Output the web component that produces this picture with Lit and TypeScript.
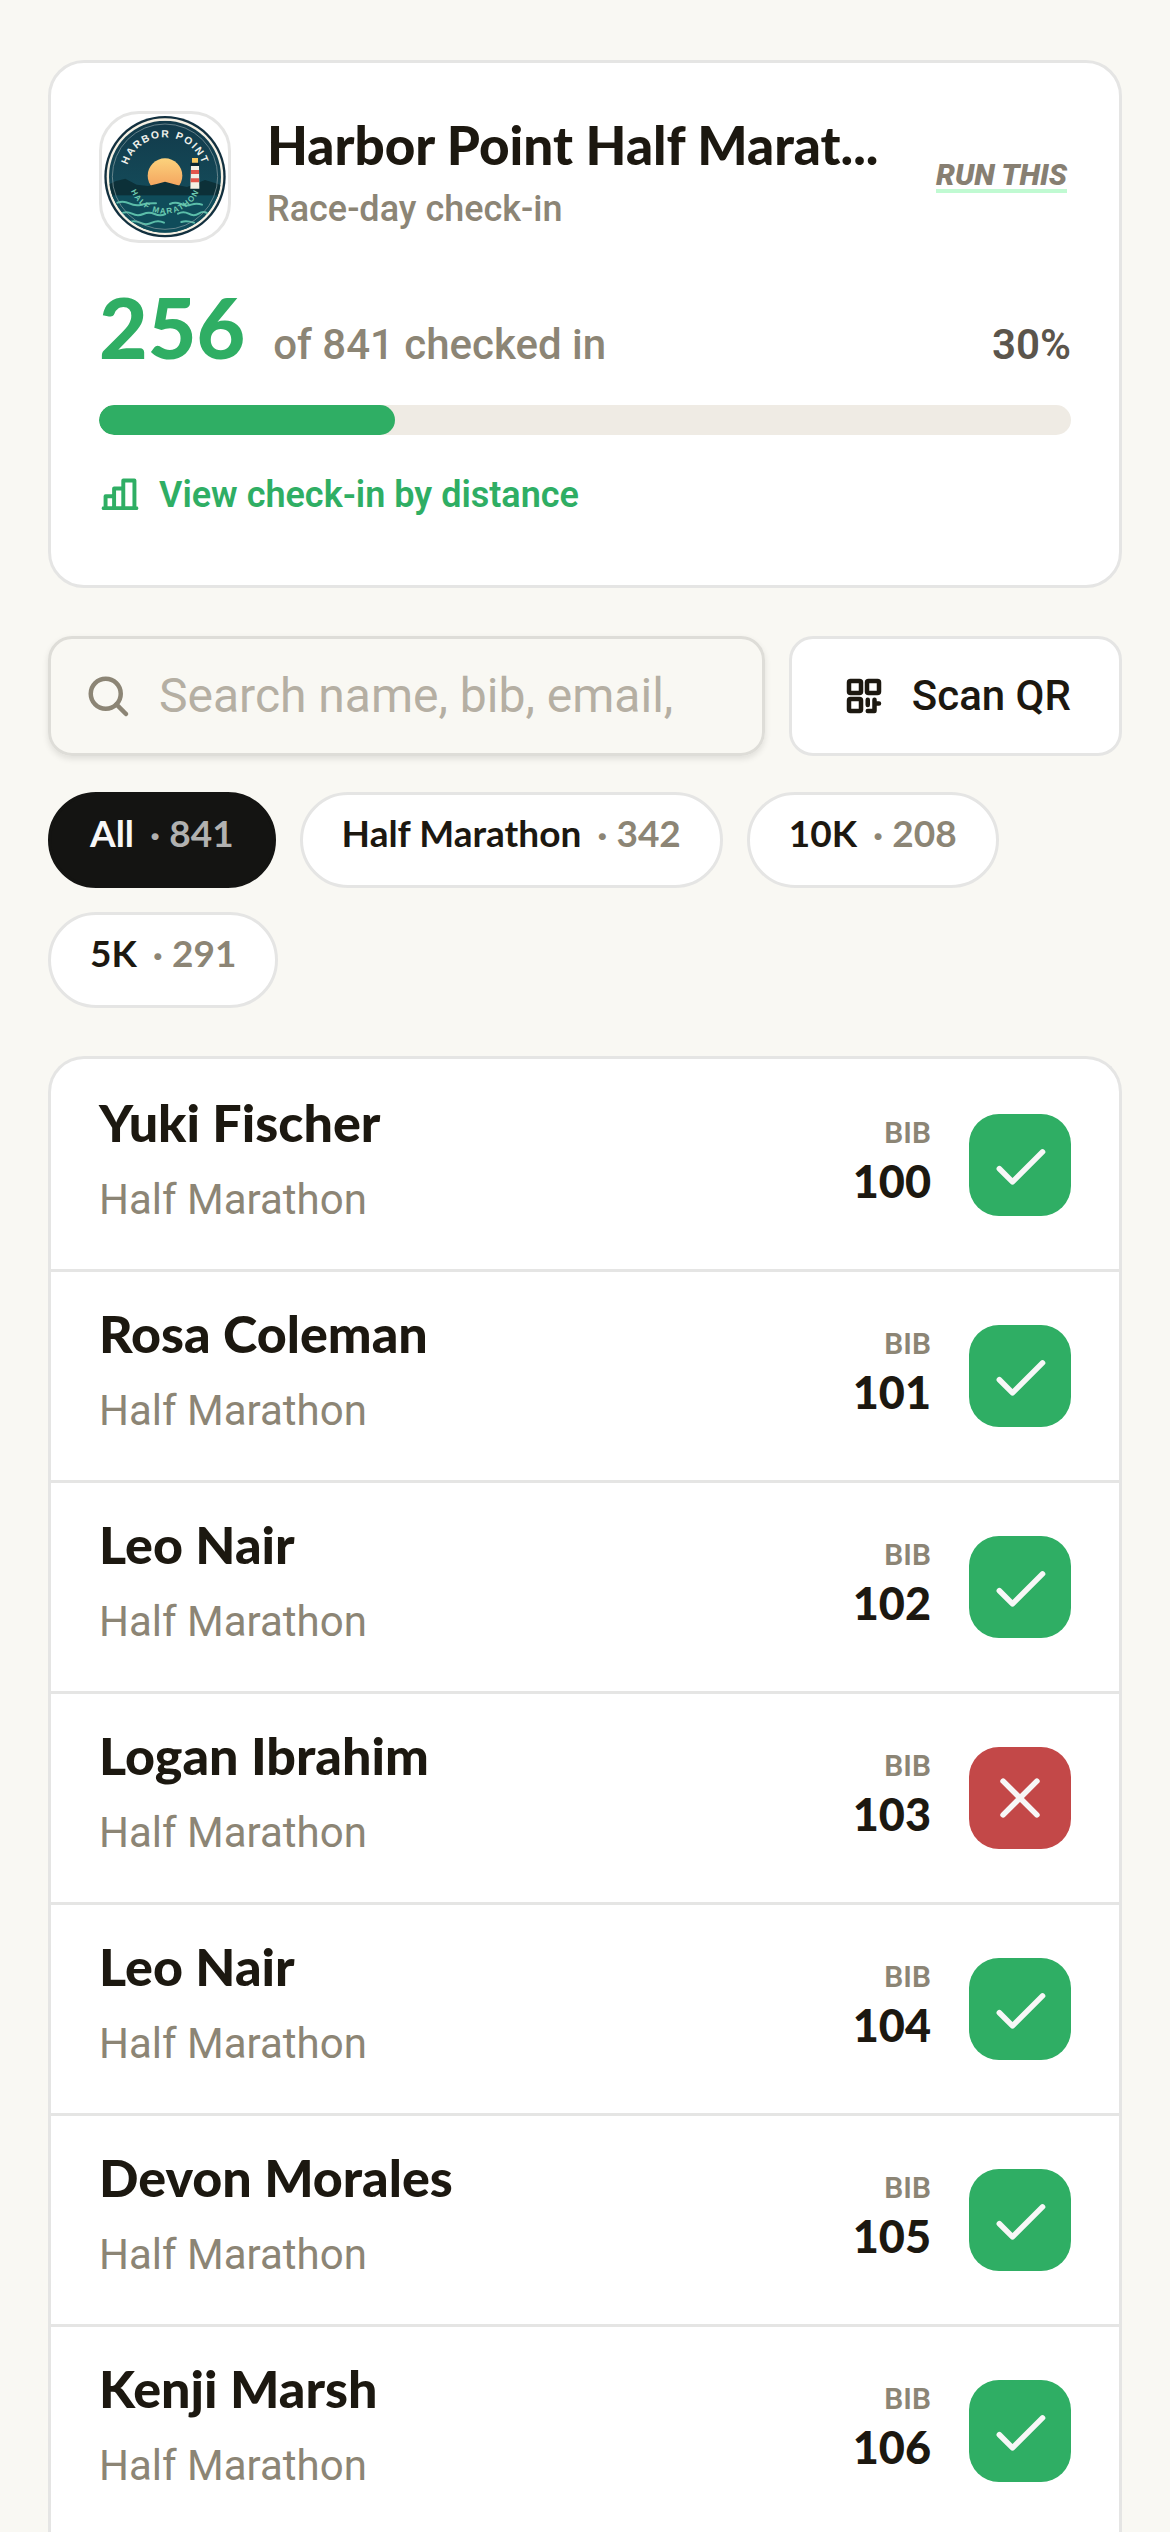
import { LitElement, html, css, svg } from 'lit';
import { customElement, property, state } from 'lit/decorators.js';
import { classMap } from 'lit/directives/class-map.js';

interface Runner {
  name: string;
  distance: string;
  bib: number;
  checkedIn: boolean;
}

interface Filter {
  label: string;
  count: number;
}

const RUNNERS: Runner[] = [
  { name: 'Yuki Fischer', distance: 'Half Marathon', bib: 100, checkedIn: true },
  { name: 'Rosa Coleman', distance: 'Half Marathon', bib: 101, checkedIn: true },
  { name: 'Leo Nair', distance: 'Half Marathon', bib: 102, checkedIn: true },
  { name: 'Logan Ibrahim', distance: 'Half Marathon', bib: 103, checkedIn: false },
  { name: 'Leo Nair', distance: 'Half Marathon', bib: 104, checkedIn: true },
  { name: 'Devon Morales', distance: 'Half Marathon', bib: 105, checkedIn: true },
  { name: 'Kenji Marsh', distance: 'Half Marathon', bib: 106, checkedIn: true },
];

const FILTERS: Filter[] = [
  { label: 'All', count: 841 },
  { label: 'Half Marathon', count: 342 },
  { label: '10K', count: 208 },
  { label: '5K', count: 291 },
];

const icons = {
  search: svg`<circle cx="116" cy="116" r="80" /><path d="M173 173l51 51" />`,
  chart: svg`<path d="M28 208h200M40 208v-72h52M92 208V88h56M148 208V40h68v168" />`,
  qr: svg`
    <rect x="48" y="48" width="64" height="64" rx="8" />
    <rect x="144" y="48" width="64" height="64" rx="8" />
    <rect x="48" y="144" width="64" height="64" rx="8" />
    <path d="M148 148v28M148 208h36v-60M184 168h24" />
  `,
  check: svg`<path d="M40 144l56 56L224 72" />`,
  cross: svg`<path d="M200 56L56 200M56 56l144 144" />`,
};

@customElement('line-icon')
export class LineIcon extends LitElement {
  @property({ type: String }) name: keyof typeof icons = 'check';

  static styles = css`
    :host {
      display: block;
      flex: none;
      width: 48px;
      height: 48px;
    }
    svg {
      display: block;
      width: 100%;
      height: 100%;
      fill: none;
      stroke: currentColor;
      stroke-width: 24;
      stroke-linecap: round;
      stroke-linejoin: round;
    }
  `;

  render() {
    return html`<svg viewBox="0 0 256 256" aria-hidden="true">${icons[this.name]}</svg>`;
  }
}

@customElement('race-badge')
export class RaceBadge extends LitElement {
  static styles = css`
    :host {
      display: block;
      flex: none;
      box-sizing: border-box;
      width: 132px;
      height: 132px;
      border: 3px solid #e5e5e4;
      border-radius: 40px;
      background: #fff;
      overflow: hidden;
    }
    svg {
      display: block;
      width: 100%;
      height: 100%;
    }
    .top,
    .bottom {
      font-family: 'Liberation Sans', Arial, sans-serif;
      font-weight: 700;
      text-anchor: middle;
    }
    .top {
      font-size: 31px;
      letter-spacing: 5px;
      fill: #eef0ea;
    }
    .bottom {
      font-size: 24px;
      letter-spacing: 4px;
      fill: #6fcbb0;
    }
  `;

  render() {
    return html`
      <svg viewBox="36 42 378 378" role="img" aria-label="Harbor Point Half Marathon">
        <defs>
          <linearGradient id="sky" x1="0" y1="0" x2="0" y2="1">
            <stop offset="0" stop-color="#123a4a" />
            <stop offset="1" stop-color="#155462" />
          </linearGradient>
          <linearGradient id="sun" x1="0" y1="0" x2="0" y2="1">
            <stop offset="0" stop-color="#fcd27c" />
            <stop offset="1" stop-color="#f29a58" />
          </linearGradient>
          <clipPath id="disc"><circle cx="225" cy="230" r="168" /></clipPath>
          <path id="arc-top" d="M107 230a118 118 0 0 1 236 0" />
          <path id="arc-bottom" d="M114 230a111 111 0 0 0 222 0" />
        </defs>
        <circle cx="225" cy="230" r="182" fill="#12303f" />
        <circle cx="225" cy="230" r="175" fill="#f6f1e4" />
        <g clip-path="url(#disc)">
          <rect x="57" y="62" width="336" height="336" fill="url(#sky)" />
          <circle cx="225" cy="227" r="52" fill="url(#sun)" />
          <path
            d="M50 256l28-13 28-7 34 18 34 4 26-6 25-7 36 10 30 6 26-10 28-11 30 9 28 10v34H50z"
            fill="#0c3038"
          />
          <rect x="57" y="286" width="336" height="120" fill="#0f4c5a" />
          <path d="M301 266l2-68h24l1 68z" fill="#f4efe4" />
          <path d="M303 210h24v12h-24zM302 235h25v12h-25z" fill="#e4574c" />
          <path d="M301 188h27v10h-27z" fill="#0c2630" />
          <path d="M306 174h18v14h-18z" fill="#f8c860" />
          <g fill="none" stroke="#5bbda9" stroke-width="6" stroke-linecap="round">
            <path d="M82 308q18-7 36 2t36 4t44-4M240 312q16-8 32 0t32 2t32 0" />
            <path d="M92 341q17-9 34 0t34 1t34 0t32 0M264 341q16-9 32 0t30 0t26-1" />
            <path d="M114 368q18-9 36 0t36 0t36 0M274 366q14-6 38 2" />
          </g>
        </g>
        <circle cx="225" cy="230" r="158" fill="none" stroke="#8fa3a6" stroke-width="2" />
        <text class="top"><textPath href="#arc-top" startOffset="50%">HARBOR POINT</textPath></text>
        <text class="bottom"><textPath href="#arc-bottom" startOffset="50%">HALF MARATHON</textPath></text>
      </svg>
    `;
  }
}

@customElement('runner-row')
export class RunnerRow extends LitElement {
  @property({ attribute: false }) runner!: Runner;

  static styles = css`
    :host {
      display: flex;
      align-items: center;
      gap: 38px;
      box-sizing: border-box;
      min-height: 211px;
      padding: 0 48px;
      border-bottom: 3px solid #e5e5e4;
      font-family: Roboto, sans-serif;
      color: #1c1810;
    }
    .who {
      flex: 1;
      min-width: 0;
      padding-bottom: 8px;
    }
    .name {
      font-family: Lato, sans-serif;
      font-size: 52px;
      font-weight: 900;
      line-height: 60px;
    }
    .distance {
      margin-top: 18px;
      font-size: 42px;
      line-height: 60px;
      color: #8c8575;
    }
    .bib {
      padding-bottom: 4px;
      text-align: right;
    }
    .bib-label {
      font-size: 30px;
      font-weight: 600;
      line-height: 36px;
      color: #8c8575;
    }
    .bib-number {
      font-family: Lato, sans-serif;
      font-size: 45px;
      font-weight: 900;
      line-height: 60px;
    }
    .toggle {
      display: grid;
      place-items: center;
      width: 102px;
      height: 102px;
      padding: 0;
      border: 0;
      border-radius: 30px;
      background: #2fae64;
      color: #f7f7f7;
      cursor: pointer;
    }
    .toggle.missing {
      background: #c34848;
    }
    .toggle line-icon {
      width: 60px;
      height: 60px;
    }
  `;

  render() {
    const { name, distance, bib, checkedIn } = this.runner;
    return html`
      <div class="who">
        <div class="name">${name}</div>
        <div class="distance">${distance}</div>
      </div>
      <div class="bib">
        <div class="bib-label">BIB</div>
        <div class="bib-number">${bib}</div>
      </div>
      <button
        type="button"
        class=${classMap({ toggle: true, missing: !checkedIn })}
        aria-pressed=${checkedIn}
        aria-label="Check in ${name}"
      >
        <line-icon name=${checkedIn ? 'check' : 'cross'}></line-icon>
      </button>
    `;
  }
}

@customElement('app-root')
export class AppRoot extends LitElement {
  @state() private _filter = 'All';
  @state() private _done = 256;
  @state() private _total = 841;

  static styles = css`
    :host {
      display: block;
      box-sizing: border-box;
      min-height: 100vh;
      padding: 60px 48px 0;
      background: #f9f8f3;
      font-family: Roboto, sans-serif;
      color: #1c1810;
    }
    .summary,
    .list {
      border: 3px solid #e5e5e4;
      border-radius: 36px;
      background: #fff;
    }
    .summary {
      padding: 48px 48px 66px;
    }
    .event {
      display: flex;
      align-items: center;
      gap: 36px;
    }
    .titles {
      flex: 1;
      min-width: 0;
    }
    h1 {
      margin: 0;
      font-family: Lato, sans-serif;
      font-size: 53px;
      font-weight: 900;
      line-height: 60px;
      white-space: nowrap;
    }
    .subtitle {
      margin: 4px 0 0;
      font-size: 36px;
      font-weight: 500;
      line-height: 60px;
      color: #8c8575;
    }
    .brand {
      margin-right: 4px;
      border-bottom: 4px solid #c0fad2;
      font-size: 30px;
      font-style: italic;
      font-weight: 900;
      line-height: 28px;
      color: #877f72;
      text-decoration: none;
    }
    .totals {
      display: flex;
      align-items: baseline;
      gap: 28px;
      margin-top: 36px;
      font-size: 42px;
      font-weight: 500;
      line-height: 60px;
      color: #8c8575;
    }
    .done {
      font-family: Lato, sans-serif;
      font-size: 84px;
      font-weight: 900;
      line-height: 96px;
      color: #2fae64;
    }
    .percent {
      margin-left: auto;
      font-weight: 600;
      color: #5b554c;
    }
    .bar {
      height: 30px;
      margin-top: 30px;
      border-radius: 15px;
      background: #efebe4;
      overflow: hidden;
    }
    .fill {
      height: 100%;
      border-radius: 15px;
      background: #2fae64;
    }
    .by-distance {
      display: flex;
      align-items: center;
      gap: 18px;
      width: fit-content;
      margin-top: 36px;
      font-size: 36px;
      font-weight: 600;
      line-height: 48px;
      color: #2fae64;
      text-decoration: none;
    }
    .by-distance line-icon {
      width: 42px;
      height: 42px;
    }
    .tools {
      display: flex;
      gap: 24px;
      margin-top: 48px;
    }
    .search,
    .scan {
      display: flex;
      align-items: center;
      box-sizing: border-box;
      height: 120px;
      border: 3px solid #e5e5e4;
      border-radius: 24px;
    }
    .search {
      flex: 1;
      min-width: 0;
      gap: 27px;
      padding: 0 33px;
      border-color: #deddd8;
      box-shadow: 0 3px 6px rgba(0, 0, 0, 0.1);
      color: #8c8575;
    }
    .search input {
      flex: 1;
      min-width: 0;
      padding: 0;
      border: 0;
      outline: none;
      background: none;
      font: 48px/60px Roboto, sans-serif;
      color: #1c1810;
    }
    .search input::placeholder {
      color: #b5afa3;
      opacity: 1;
    }
    .scan {
      gap: 24px;
      padding: 0 48px;
      background: #fff;
      font: 500 42px/60px Roboto, sans-serif;
      color: #1c1810;
      cursor: pointer;
    }
    .filters {
      display: flex;
      flex-wrap: wrap;
      gap: 24px;
      margin-top: 36px;
    }
    .chip {
      display: flex;
      gap: 16px;
      box-sizing: border-box;
      height: 96px;
      padding: 14px 39px 0;
      border: 3px solid #e5e5e4;
      border-radius: 48px;
      background: #fff;
      font: 700 37px/48px Lato, sans-serif;
      color: #1c1810;
      cursor: pointer;
    }
    .count {
      color: #8c8575;
    }
    .chip.active {
      border-color: #141412;
      background: #141412;
      color: #f7f7f7;
    }
    .chip.active .count {
      color: #b1b1b0;
    }
    /* open at the bottom: the list runs on past the fold */
    .list {
      margin-top: 48px;
      padding-top: 2px;
      border-bottom: 0;
      border-radius: 36px 36px 0 0;
    }
  `;

  private _chip(filter: Filter) {
    const active = filter.label === this._filter;
    return html`
      <button
        type="button"
        class=${classMap({ chip: true, active })}
        aria-pressed=${active}
        @click=${() => (this._filter = filter.label)}
      >
        <span>${filter.label}</span><span class="count">· ${filter.count}</span>
      </button>
    `;
  }

  render() {
    const share = (this._done / this._total) * 100;
    return html`
      <section class="summary">
        <header class="event">
          <race-badge></race-badge>
          <div class="titles">
            <h1>Harbor Point Half Marat...</h1>
            <p class="subtitle">Race-day check-in</p>
          </div>
          <a class="brand" href="#">RUN THIS</a>
        </header>
        <div class="totals">
          <span class="done">${this._done}</span>
          <span>of ${this._total} checked in</span>
          <span class="percent">${Math.round(share)}%</span>
        </div>
        <div
          class="bar"
          role="progressbar"
          aria-label="Checked in"
          aria-valuemax=${this._total}
          aria-valuenow=${this._done}
        >
          <div class="fill" style="width: ${share}%"></div>
        </div>
        <a class="by-distance" href="#">
          <line-icon name="chart"></line-icon>
          <span>View check-in by distance</span>
        </a>
      </section>

      <div class="tools">
        <label class="search">
          <line-icon name="search"></line-icon>
          <input type="search" aria-label="Search runners" placeholder="Search name, bib, email," />
        </label>
        <button type="button" class="scan">
          <line-icon name="qr"></line-icon>
          <span>Scan QR</span>
        </button>
      </div>

      <div class="filters">${FILTERS.map((filter) => this._chip(filter))}</div>

      <div class="list">
        ${RUNNERS.map((runner) => html`<runner-row .runner=${runner}></runner-row>`)}
      </div>
    `;
  }
}

declare global {
  interface HTMLElementTagNameMap {
    'app-root': AppRoot;
    'line-icon': LineIcon;
    'race-badge': RaceBadge;
    'runner-row': RunnerRow;
  }
}
